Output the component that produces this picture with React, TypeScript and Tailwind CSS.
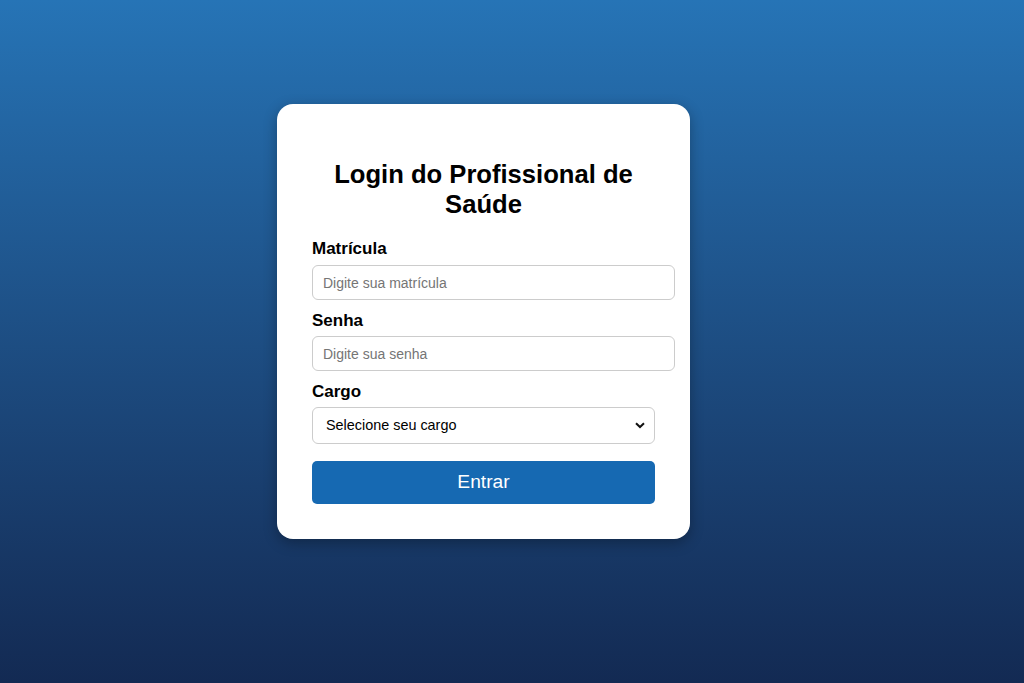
export default function App() {
  return (
    <div
      className="min-h-screen w-full flex justify-center bg-gradient-to-b from-[#2674b6] to-[#132a53] pt-[104px] pr-[57px]"
      style={{ fontFamily: '"Liberation Sans", Arial, sans-serif' }}
    >
      <div className="self-start w-[413px] bg-white rounded-[16px] shadow-[0_4px_14px_rgba(0,0,0,0.3)] p-[35px]">
        <h2 className="mt-[20px] mb-[21px] text-center text-[25.6px] leading-[30px] font-bold text-black">
          Login do Profissional de Saúde
        </h2>

        <form onSubmit={(e) => e.preventDefault()}>
          <label className="block text-[17px] leading-[18px] font-bold text-black mb-[7px]">Matrícula</label>
          <input
            type="text"
            placeholder="Digite sua matrícula"
            className="block w-[363px] h-[35px] border border-[#ccc] rounded-[6px] px-[10px] text-[14px] text-black placeholder:text-[#757575] mb-[12px] focus:outline-none"
          />

          <label className="block text-[17px] leading-[18px] font-bold text-black mb-[6px]">Senha</label>
          <input
            type="password"
            placeholder="Digite sua senha"
            className="block w-[363px] h-[35px] border border-[#ccc] rounded-[6px] px-[10px] text-[14px] text-black placeholder:text-[#757575] mb-[12px] focus:outline-none"
          />

          <label className="block text-[17px] leading-[18px] font-bold text-black mb-[6px]">Cargo</label>
          <div className="relative w-[343px] mb-[17px]">
            <select
              defaultValue=""
              className="appearance-none block w-full h-[37px] border border-[#ccc] rounded-[6px] pl-[13px] pr-8 text-[14.4px] text-black bg-white focus:outline-none"
            >
              <option value="" disabled>
                Selecione seu cargo
              </option>
              <option value="medico">Médico</option>
              <option value="enfermeiro">Enfermeiro</option>
              <option value="tecnico">Técnico de Enfermagem</option>
            </select>
            <svg
              className="pointer-events-none absolute right-[10px] top-[15px]"
              width="10"
              height="7"
              viewBox="0 0 10 7"
            >
              <path d="M1 1.2 L5 5 L9 1.2" fill="none" stroke="#111" strokeWidth="2" />
            </svg>
          </div>

          <button
            type="submit"
            className="block w-[343px] h-[43px] rounded-[5px] bg-[#1669b2] text-white text-[19.2px]"
          >
            Entrar
          </button>
        </form>
      </div>
    </div>
  )
}
